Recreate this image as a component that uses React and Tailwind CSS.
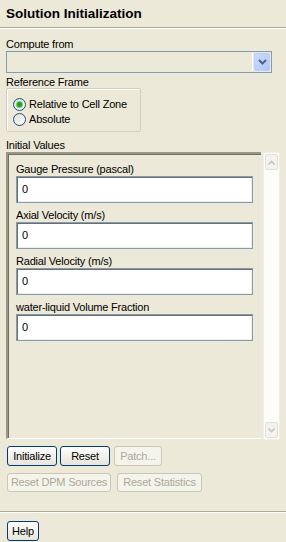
import React from 'react';

function XpButton({ children, className = '', disabled }) {
  const look = disabled
    ? 'border-[#C9C7BA] bg-[#F5F4EA] text-[#ACA899]'
    : 'border-[#003C74] bg-gradient-to-b from-white to-[#E6E4DA] text-black';
  return (
    <div className={`flex items-center justify-center border rounded-[3px] ${look} ${className}`}>
      {children}
    </div>
  );
}

function Radio({ checked, label }) {
  return (
    <div className="h-[15px] flex items-center">
      <div className="w-[13px] h-[13px] rounded-full border border-[#1C5180] bg-gradient-to-br from-[#DCDCD7] to-white flex items-center justify-center">
        {checked && <div className="w-[5px] h-[5px] rounded-full bg-[#21A121] shadow-[0_0_0_1px_#6FCF6F]" />}
      </div>
      <span className="ml-[3px]">{label}</span>
    </div>
  );
}

function Field({ label, first }) {
  return (
    <div className={first ? 'mt-[9px]' : 'mt-[6px]'}>
      <div className="h-[12px] leading-[12px] whitespace-nowrap">{label}</div>
      <div className="mt-[1px] w-[237px] h-[27px] border border-[#7F9DB9] bg-white shadow-[inset_1px_1px_0_#716F64,inset_-1px_-1px_0_#F1EFE2] pl-[5px] flex items-center">
        0
      </div>
    </div>
  );
}

function ScrollArrow({ up }) {
  return (
    <div className="mx-[1px] h-[16px] rounded-[2px] border border-[#E3E2DA] bg-[#F3F2EC] flex items-center justify-center">
      <svg width="7" height="5" viewBox="0 0 7 5">
        <path d={up ? 'M0.5 4.5 L3.5 1.5 L6.5 4.5' : 'M0.5 0.5 L3.5 3.5 L6.5 0.5'} stroke="#C8C7BD" strokeWidth="1.6" fill="none" />
      </svg>
    </div>
  );
}

export default function App() {
  return (
    <div className="w-[286px] h-[542px] bg-[#ECE9D8] text-black text-[11px] tracking-[-0.2px] font-['Liberation_Sans',Arial,sans-serif] overflow-hidden">
      {/* header */}
      <div className="h-[27px] px-[6px] pt-[5px]">
        <div className="text-[13.5px] tracking-normal font-bold leading-[18px]">Solution Initialization</div>
      </div>
      <div className="h-px bg-[#ACA899]" />
      <div className="h-px bg-white" />

      <div className="px-[6px]">
        <div className="mt-[8px] h-[14px] leading-[14px]">Compute from</div>
        <div className="w-[266px] h-[22px] border border-[#7F9DB9] flex p-[1px]">
          <div className="flex-1 bg-[#ECE9D8]" />
          <div className="w-[1px] bg-white" />
          <div className="w-[1px]" />
          <div className="w-[16px] rounded-[2px] bg-gradient-to-br from-[#CCDBFF] to-[#B0C6F8] border border-[#BCCEF7] flex items-center justify-center">
            <svg width="9" height="6" viewBox="0 0 9 6">
              <path d="M1 1 L4.5 4.5 L8 1" stroke="#4D6185" strokeWidth="2" fill="none" />
            </svg>
          </div>
        </div>

        <div className="mt-[3px] h-[12px] leading-[12px]">Reference Frame</div>
        <div className="w-[135px] h-[44px] border border-[#D0D0BF] rounded-[2px] shadow-[inset_1px_1px_0_white] pl-[6px] pt-[8px]">
          <Radio checked label="Relative to Cell Zone" />
          <Radio label="Absolute" />
        </div>

        <div className="mt-[7px] h-[12px] leading-[12px]">Initial Values</div>
        <div className="mt-[1px] flex h-[287px]">
          <div className="w-[255px] border-l-2 border-t-2 border-l-[#9A978A] border-t-[#9A978A] border-b border-b-white shadow-[inset_1px_1px_0_#716F64] pl-[8px]">
            <Field first label="Gauge Pressure (pascal)" />
            <Field label="Axial Velocity (m/s)" />
            <Field label="Radial Velocity (m/s)" />
            <Field label="water-liquid Volume Fraction" />
          </div>
          <div className="ml-[2px] w-[17px] h-[288px] bg-[#FCFCF8] border border-[#F0EFE6] flex flex-col justify-between py-[1px]">
            <ScrollArrow up />
            <ScrollArrow />
          </div>
        </div>

        <div className="mt-[7px] ml-[1px] flex h-[20px]">
          <XpButton className="w-[50px]">Initialize</XpButton>
          <XpButton className="ml-[3px] w-[50px]">Reset</XpButton>
          <XpButton disabled className="ml-[4px] w-[48px]">Patch...</XpButton>
        </div>
        <div className="mt-[7px] ml-[1px] flex h-[19px]">
          <XpButton disabled className="w-[104px]">Reset DPM Sources</XpButton>
          <XpButton disabled className="ml-[6px] w-[85px]">Reset Statistics</XpButton>
        </div>
      </div>

      <div className="mt-[19px] h-px bg-[#ACA899]" />
      <div className="h-px bg-white" />
      <div className="px-[7px] mt-[8px] flex">
        <XpButton className="w-[32px] h-[20px]">Help</XpButton>
      </div>
    </div>
  );
}
